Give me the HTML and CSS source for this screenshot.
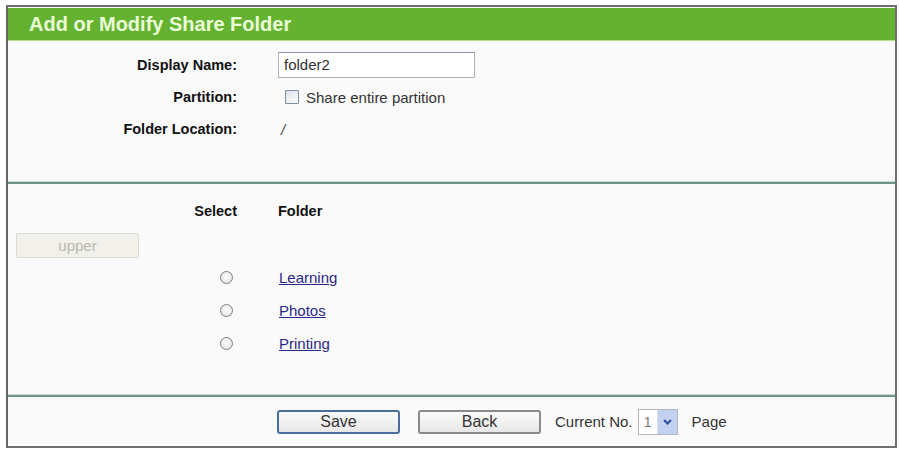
FILE: index.html
```html
<!DOCTYPE html>
<html>
<head>
<meta charset="utf-8">
<link rel="stylesheet" href="styles.css">
</head>
<body>
<div class="frame">
  <div class="title">Add or Modify Share Folder</div>
  <div class="section top">
    <div class="row">
      <div class="label">Display Name:</div>
      <div class="value"><div class="textbox">folder2</div></div>
    </div>
    <div class="row">
      <div class="label">Partition:</div>
      <div class="value"><span class="checkbox"></span><span class="cbtext">Share entire partition</span></div>
    </div>
    <div class="row">
      <div class="label">Folder Location:</div>
      <div class="value"><span class="slash">/</span></div>
    </div>
  </div>
  <div class="divider"></div>
  <div class="section middle">
    <div class="row head">
      <div class="label">Select</div>
      <div class="value bold">Folder</div>
    </div>
    <div class="upper-row"><span class="upper">upper</span></div>
    <div class="row frow">
      <div class="label"><span class="radio"></span></div>
      <div class="value"><a class="link" href="#">Learning</a></div>
    </div>
    <div class="row frow">
      <div class="label"><span class="radio"></span></div>
      <div class="value"><a class="link" href="#">Photos</a></div>
    </div>
    <div class="row frow">
      <div class="label"><span class="radio"></span></div>
      <div class="value"><a class="link" href="#">Printing</a></div>
    </div>
  </div>
  <div class="divider"></div>
  <div class="section bottom">
    <span class="btn focus">Save</span>
    <span class="btn back">Back</span>
    <span class="cur">Current No.</span>
    <span class="select"><span class="selval">1</span><span class="arrow"><svg width="9" height="6" viewBox="0 0 9 6"><path d="M1 1 L4.5 4.5 L8 1" fill="none" stroke="#2a4f9a" stroke-width="2"/></svg></span></span>
    <span class="page">Page</span>
  </div>
</div>
</body>
</html>
```

FILE: styles.css
```css
html, body {
  margin: 0;
  padding: 0;
  background: #ffffff;
}
body {
  font-family: "Liberation Sans", Arial, sans-serif;
  color: #222;
  width: 900px;
  height: 451px;
  overflow: hidden;
}
.frame {
  margin: 5px 0 0 6px;
  width: 887px;
  height: 438px;
  border: 2px solid #707070;
  border-left-color: #666;
  background: #fafafa;
  padding: 1px 0 0 0;
  box-sizing: content-box;
  display: flex;
  flex-direction: column;
}
.title {
  height: 32px;
  background: #64b230;
  color: #eaffd8;
  font-weight: bold;
  font-size: 20px;
  line-height: 32px;
  padding-left: 21px;
  border-bottom: 1px solid #b8e08c;
  flex: none;
}
.section.top {
  height: 140px;
  padding-top: 8px;
  box-sizing: border-box;
  flex: none;
}
.divider {
  height: 2px;
  background: #6e9686;
  border-top: 1px solid #c8dccf;
  flex: none;
}
.row {
  display: grid;
  grid-template-columns: 229px 1fr;
  column-gap: 41px;
  height: 32px;
  align-items: center;
}
.label {
  text-align: right;
  font-weight: bold;
  font-size: 14.5px;
  color: #111;
}
.value {
  font-size: 15px;
  display: flex;
  align-items: center;
}
.bold {
  font-weight: bold;
  font-size: 14.5px;
  color: #111;
}
.textbox {
  width: 190px;
  height: 24px;
  border: 1px solid #a9b3bd;
  border-top-color: #8a96a3;
  background: #fff;
  font-size: 15px;
  line-height: 24px;
  padding-left: 5px;
  color: #333;
}
.checkbox {
  width: 12px;
  height: 12px;
  border: 1px solid #7b8fa6;
  background: linear-gradient(135deg, #dfe3e8, #fbfbfb);
  margin-left: 7px;
  margin-right: 7px;
  border-radius: 1px;
}
.cbtext {
  color: #333;
}
.slash {
  margin-left: 3px;
  font-style: italic;
  color: #444;
}
.section.middle {
  height: 210px;
  padding-top: 11px;
  box-sizing: border-box;
  flex: none;
}
.upper-row {
  height: 25px;
  margin-top: 6px;
  margin-bottom: 3px;
  padding-left: 8px;
}
.upper {
  display: inline-block;
  width: 121px;
  height: 23px;
  border: 1px solid #dcdcd4;
  border-radius: 2px;
  background: #f1f0ea;
  color: #b8b8b0;
  font-size: 15px;
  line-height: 23px;
  text-align: center;
}
.frow {
  height: 33px;
}
.frow .label {
  display: flex;
  justify-content: flex-end;
  padding-right: 4px;
}
.radio {
  width: 11px;
  height: 11px;
  border-radius: 50%;
  border: 1px solid #7a8088;
  background: radial-gradient(circle at 50% 40%, #ffffff, #dcdcdc);
}
.link {
  color: #2a2888;
  text-decoration: underline;
  margin-left: 1px;
}
.section.bottom {
  flex: 1;
  display: flex;
  align-items: center;
  padding-left: 269px;
}
.btn {
  display: inline-block;
  width: 119px;
  height: 20px;
  border: 2px solid #8a8a8a;
  border-radius: 3px;
  background: linear-gradient(#fbfbfb, #e7e7e7);
  font-size: 16px;
  line-height: 20px;
  text-align: center;
  color: #333;
}
.btn.focus {
  border-color: #4a6d9e;
}
.btn.back {
  margin-left: 18px;
}
.cur {
  margin-left: 14px;
  font-size: 15px;
  color: #333;
}
.select {
  margin-left: 5px;
  display: inline-flex;
  width: 38px;
  height: 24px;
  border: 1px solid #b0b8c4;
  background: #fff;
}
.selval {
  width: 18px;
  font-size: 14px;
  line-height: 24px;
  color: #777;
  text-align: center;
}
.arrow {
  flex: 1;
  background: #c4d2f2;
  border-left: 1px solid #d8e0f2;
  display: flex;
  align-items: center;
  justify-content: center;
}
.page {
  margin-left: 14px;
  font-size: 15px;
  color: #333;
}
```
